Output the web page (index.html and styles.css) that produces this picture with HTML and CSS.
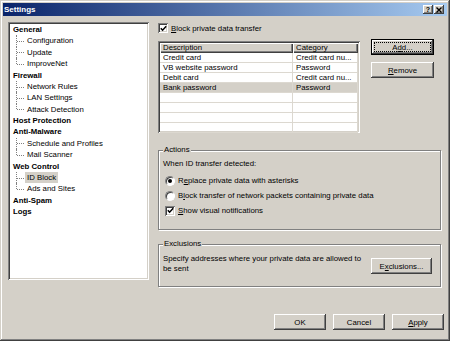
FILE: index.html
```html
<!DOCTYPE html>
<html lang="en">

<head>
    <meta charset="UTF-8">
    <title>Settings</title>
    <link rel="stylesheet" href="styles.css">
</head>

<body>
    <div class="window">
        <div class="titlebar">
            <span class="title">Settings</span>
            <div class="title-btns">
                <span class="tbtn help">?</span>
                <span class="tbtn">
                    <svg width="6" height="6" viewBox="0 0 6 6">
                        <path d="M0.5 0.5L5.5 5.5M5.5 0.5L0.5 5.5" stroke="#000" stroke-width="1.4" />
                    </svg>
                </span>
            </div>
        </div>

        <div class="main">
            <ul class="tree">
                <li><span class="label root">General</span>
                    <ul class="children">
                        <li class="leaf"><span class="label">Configuration</span></li>
                        <li class="leaf"><span class="label">Update</span></li>
                        <li class="leaf"><span class="label">ImproveNet</span></li>
                    </ul>
                </li>
                <li><span class="label root">Firewall</span>
                    <ul class="children">
                        <li class="leaf"><span class="label">Network Rules</span></li>
                        <li class="leaf"><span class="label">LAN Settings</span></li>
                        <li class="leaf"><span class="label">Attack Detection</span></li>
                    </ul>
                </li>
                <li><span class="label root">Host Protection</span></li>
                <li><span class="label root">Anti-Malware</span>
                    <ul class="children">
                        <li class="leaf"><span class="label">Schedule and Profiles</span></li>
                        <li class="leaf"><span class="label">Mail Scanner</span></li>
                    </ul>
                </li>
                <li><span class="label root">Web Control</span>
                    <ul class="children">
                        <li class="leaf"><span class="label selected">ID Block</span></li>
                        <li class="leaf"><span class="label">Ads and Sites</span></li>
                    </ul>
                </li>
                <li><span class="label root">Anti-Spam</span></li>
                <li><span class="label root">Logs</span></li>
            </ul>

            <div class="panel">
                <div class="check-row top-check">
                    <span class="checkbox">
                        <svg width="7" height="7" viewBox="0 0 7 7">
                            <path d="M0.8 3.2L2.6 5.2L6.2 1.2" fill="none" stroke="#000" stroke-width="1.5" />
                        </svg>
                    </span>
                    <span><u>B</u>lock private data transfer</span>
                </div>

                <div class="list-row">
                    <div class="list">
                        <div class="row head">
                            <span class="cell">Description</span>
                            <span class="cell">Category</span>
                        </div>
                        <div class="row">
                            <span class="cell">Credit card</span>
                            <span class="cell">Credit card nu...</span>
                        </div>
                        <div class="row">
                            <span class="cell">VB website password</span>
                            <span class="cell">Password</span>
                        </div>
                        <div class="row">
                            <span class="cell">Debit card</span>
                            <span class="cell">Credit card nu...</span>
                        </div>
                        <div class="row selected">
                            <span class="cell">Bank password</span>
                            <span class="cell">Password</span>
                        </div>
                        <div class="row"><span class="cell"></span><span class="cell"></span></div>
                        <div class="row"><span class="cell"></span><span class="cell"></span></div>
                        <div class="row"><span class="cell"></span><span class="cell"></span></div>
                        <div class="row"><span class="cell"></span><span class="cell"></span></div>
                    </div>
                    <div class="side-btns">
                        <button class="btn default"><span class="btn-text">A<u>d</u>d...</span></button>
                        <button class="btn"><u>R</u>emove</button>
                    </div>
                </div>

                <div class="group actions">
                    <span class="group-title">Actions</span>
                    <div class="hint">When ID transfer detected:</div>
                    <div class="check-row option">
                        <span class="radio checked"></span>
                        <span>R<u>e</u>place private data with asterisks</span>
                    </div>
                    <div class="check-row option">
                        <span class="radio"></span>
                        <span>B<u>l</u>ock transfer of network packets containing private data</span>
                    </div>
                    <div class="check-row option">
                        <span class="checkbox">
                            <svg width="7" height="7" viewBox="0 0 7 7">
                                <path d="M0.8 3.2L2.6 5.2L6.2 1.2" fill="none" stroke="#000" stroke-width="1.5" />
                            </svg>
                        </span>
                        <span><u>S</u>how visual notifications</span>
                    </div>
                </div>

                <div class="group exclusions">
                    <span class="group-title">Exclusions</span>
                    <div class="excl-body">
                        <div class="excl-text">Specify addresses where your private data are allowed to be sent</div>
                        <button class="btn excl-btn">E<u>x</u>clusions...</button>
                    </div>
                </div>
            </div>
        </div>

        <div class="footer">
            <button class="btn foot-btn">OK</button>
            <button class="btn foot-btn">Cancel</button>
            <button class="btn foot-btn"><u>A</u>pply</button>
        </div>
    </div>
</body>

</html>
```

FILE: styles.css
```css
body {
    margin: 0;
    background: #d4d0c8;
}

.window {
    width: 450px;
    height: 341px;
    box-sizing: border-box;
    padding: 3px;
    display: flex;
    flex-direction: column;
    background: #d4d0c8;
    box-shadow: inset -1px -1px #404040, inset 1px 1px #d4d0c8,
        inset -2px -2px #808080, inset 2px 2px #fff;
    font-family: "Liberation Sans", Arial, sans-serif;
    font-size: 7.8px;
    color: #000;
}

u {
    text-decoration: underline;
    text-underline-offset: 1px;
}

/* Title bar */
.titlebar {
    height: 13px;
    display: flex;
    align-items: center;
    justify-content: space-between;
    padding: 0 3px 0 1px;
    background: linear-gradient(to right, #0a246a, #a6caf0);
}

.title {
    color: #fff;
    font-weight: bold;
    font-size: 8px;
}

.title-btns {
    display: flex;
    gap: 1px;
}

.tbtn {
    width: 10px;
    height: 9px;
    box-sizing: border-box;
    display: flex;
    align-items: center;
    justify-content: center;
    background: #d4d0c8;
    box-shadow: inset -1px -1px #404040, inset 1px 1px #fff, inset -2px -2px #808080;
}

.help {
    font-weight: bold;
    font-size: 7px;
    line-height: 9px;
}

/* Main area */
.main {
    display: flex;
    align-items: flex-start;
    gap: 9px;
    padding-left: 5px;
    margin-top: 6px;
}

.tree {
    list-style: none;
    margin: 0;
    padding: 2px 0 0 3px;
    width: 141px;
    height: 258px;
    box-sizing: border-box;
    background: #fff;
    box-shadow: inset 1px 1px #808080, inset -1px -1px #fff,
        inset 2px 2px #404040, inset -2px -2px #d4d0c8;
}

.tree ul {
    list-style: none;
    margin: 0;
    padding: 0;
}

.label {
    display: inline-block;
    padding: 0 2px;
    line-height: 11.375px;
    height: 11.375px;
    white-space: nowrap;
}

.root {
    font-weight: bold;
}

.label.selected {
    background: #d4d0c8;
}

.leaf {
    position: relative;
    padding-left: 14px;
}

.leaf::before {
    content: '';
    position: absolute;
    left: 5px;
    top: 0;
    bottom: 0;
    border-left: 1px dotted #808080;
}

.leaf:last-child::before {
    bottom: 50%;
}

.leaf::after {
    content: '';
    position: absolute;
    left: 6px;
    top: 50%;
    width: 7px;
    border-top: 1px dotted #808080;
}

/* Right panel */
.panel {
    width: 283px;
    display: flex;
    flex-direction: column;
}

.check-row {
    display: flex;
    align-items: center;
    gap: 3px;
    white-space: nowrap;
}

.top-check {
    margin-top: 1px;
    height: 10px;
}

.checkbox {
    width: 10px;
    height: 10px;
    box-sizing: border-box;
    display: flex;
    align-items: center;
    justify-content: center;
    background: #fff;
    box-shadow: inset 1px 1px #808080, inset -1px -1px #fff,
        inset 2px 2px #404040, inset -2px -2px #d4d0c8;
}

.radio {
    width: 10px;
    height: 10px;
    box-sizing: border-box;
    border-radius: 50%;
    background: #fff;
    border: 1px solid;
    border-color: #808080 #fff #fff #808080;
    box-shadow: inset 1px 1px #404040;
    display: flex;
    align-items: center;
    justify-content: center;
}

.radio.checked::after {
    content: '';
    width: 4px;
    height: 4px;
    border-radius: 50%;
    background: #000;
}

.list-row {
    display: flex;
    align-items: flex-start;
    gap: 11px;
    margin-top: 8px;
}

.list {
    width: 202px;
    height: 92px;
    box-sizing: border-box;
    padding: 2px;
    overflow: hidden;
    background: #fff;
    box-shadow: inset 1px 1px #808080, inset -1px -1px #fff,
        inset 2px 2px #404040, inset -2px -2px #d4d0c8;
}

.row {
    display: grid;
    grid-template-columns: 133px 65px;
    height: 10px;
    box-sizing: border-box;
    border-bottom: 1px solid #dcd8d0;
}

.cell {
    padding-left: 3px;
    line-height: 9px;
    white-space: nowrap;
    overflow: hidden;
    border-right: 1px solid #dcd8d0;
}

.row.head {
    border-bottom: none;
}

.row.head .cell {
    line-height: 10px;
    border-right: none;
    background: #d4d0c8;
    box-shadow: inset 1px 1px #fff, inset -1px -1px #404040, inset -2px -2px #808080;
}

.row.selected {
    background: #d4d0c8;
}

.side-btns {
    display: flex;
    flex-direction: column;
    gap: 7px;
    margin-top: -2px;
}

.btn {
    width: 63px;
    height: 16px;
    box-sizing: border-box;
    padding: 0;
    border: none;
    position: relative;
    font: inherit;
    color: #000;
    background: #d4d0c8;
    box-shadow: inset -1px -1px #404040, inset 1px 1px #fff,
        inset -2px -2px #808080, inset 2px 2px #d4d0c8;
}

.btn.default {
    box-shadow: inset 0 0 0 1px #000, inset -2px -2px #404040,
        inset 2px 2px #fff, inset -3px -3px #808080;
}

.btn.default::after {
    content: '';
    position: absolute;
    inset: 3px;
    border: 1px dotted #000;
}

.btn-text {
    position: relative;
    z-index: 1;
}

/* Groups */
.group {
    box-sizing: border-box;
    border: 1px solid #808080;
    box-shadow: inset 1px 1px #fff, 1px 1px #fff;
    padding: 0 8px 0 4px;
    display: flex;
    flex-direction: column;
    align-items: flex-start;
}

.group-title {
    margin-top: -6px;
    padding: 0 1px;
    line-height: 10px;
    background: #d4d0c8;
}

.actions {
    margin-top: 17px;
    height: 80px;
}

.hint {
    margin-top: 4px;
    line-height: 10px;
}

.option {
    height: 15px;
    margin-left: 2px;
}

.option:nth-of-type(2) {
    margin-top: 4px;
}

.exclusions {
    margin-top: 14px;
    height: 43px;
}

.excl-body {
    display: flex;
    align-items: flex-start;
    justify-content: space-between;
    align-self: stretch;
    margin-top: 5px;
}

.excl-text {
    width: 205px;
    line-height: 10px;
}

.excl-btn {
    width: 61px;
    margin-top: 4px;
}

/* Footer */
.footer {
    margin-top: auto;
    display: flex;
    justify-content: flex-end;
    gap: 7px;
    padding: 0 3px 8px 0;
}

.foot-btn {
    width: 52px;
}
```
